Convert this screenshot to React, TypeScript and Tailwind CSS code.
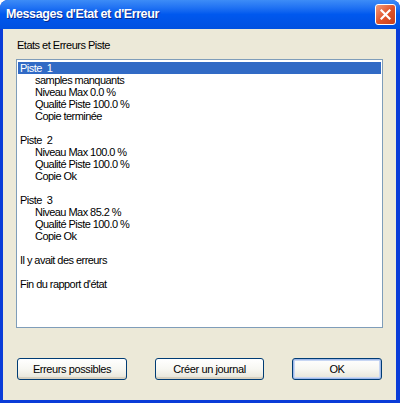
import React from 'react'

type Line = { text: string; indent?: boolean; selected?: boolean }

const lines: Line[] = [
  { text: 'Piste  1', selected: true },
  { text: 'samples manquants', indent: true },
  { text: 'Niveau Max 0.0 %', indent: true },
  { text: 'Qualité Piste 100.0 %', indent: true },
  { text: 'Copie terminée', indent: true },
  { text: '' },
  { text: 'Piste  2' },
  { text: 'Niveau Max 100.0 %', indent: true },
  { text: 'Qualité Piste 100.0 %', indent: true },
  { text: 'Copie Ok', indent: true },
  { text: '' },
  { text: 'Piste  3' },
  { text: 'Niveau Max 85.2 %', indent: true },
  { text: 'Qualité Piste 100.0 %', indent: true },
  { text: 'Copie Ok', indent: true },
  { text: '' },
  { text: 'Il y avait des erreurs' },
  { text: '' },
  { text: "Fin du rapport d'état" },
]

function XpButton({ label, width, isDefault }: { label: string; width: string; isDefault?: boolean }) {
  return (
    <button
      className={`${width} h-[22px] rounded-[3px] border border-[#003c74] bg-gradient-to-b from-white via-[#f7f7f2] to-[#e6e4d7] text-[11px] tracking-[-0.4px] text-black ${
        isDefault ? 'shadow-[inset_0_0_0_1px_#9fb8e8,inset_0_0_0_2px_#c7d6f3]' : 'shadow-[inset_0_-2px_0_#d6d0c0]'
      }`}
    >
      {label}
    </button>
  )
}

export default function App() {
  return (
    <div
      className="w-[400px] h-[403px] bg-white"
      style={{ fontFamily: '"Liberation Sans", Arial, sans-serif' }}
    >
      <div className="w-full h-full flex flex-col rounded-t-[8px] bg-[#0a3cd8] overflow-hidden">
        {/* Title bar */}
        <div className="h-[29px] flex items-center justify-between pl-[6px] pr-[4px] bg-gradient-to-b from-[#3d8cf7] via-[#0058ee] to-[#0050e0]">
          <span className="text-white font-bold text-[12.5px] tracking-[-0.4px] [text-shadow:1px_1px_0_#0a2a8c]">
            Messages d'Etat et d'Erreur
          </span>
          <div className="w-[21px] h-[21px] rounded-[3px] border border-white bg-gradient-to-br from-[#f19b7c] via-[#e1542b] to-[#c8401c] flex items-center justify-center">
            <svg width="11" height="11" viewBox="0 0 11 11">
              <path d="M1.5 1.5 L9.5 9.5 M9.5 1.5 L1.5 9.5" stroke="white" strokeWidth="2.2" strokeLinecap="square" />
            </svg>
          </div>
        </div>

        {/* Body */}
        <div className="flex-1 ml-[3px] mr-[4px] mb-[3px] bg-[#ece9d8] flex flex-col">
          <div className="pl-[14px] pt-[10px] h-[30px] text-[11px] tracking-[-0.5px] text-black leading-[13px]">
            Etats et Erreurs Piste
          </div>
          <div className="ml-[13px] w-[367px] h-[269px] border border-[#7f9db9] bg-white p-[1px] pt-[2px]">
            {lines.map((l, i) => (
              <div
                key={i}
                className={`h-[12px] leading-[12px] text-[11px] tracking-[-0.55px] whitespace-pre ${
                  l.selected ? 'bg-[#316ac5] text-white' : 'text-black'
                } ${l.indent ? 'pl-[17px]' : 'pl-[2px]'}`}
              >
                {l.text}
              </div>
            ))}
          </div>
          <div className="flex items-start pt-[30px] pl-[14px]">
            <XpButton label="Erreurs possibles" width="w-[110px]" />
            <div className="w-[28px]" />
            <XpButton label="Créer un journal" width="w-[109px]" />
            <div className="w-[28px]" />
            <XpButton label="OK" width="w-[90px]" isDefault />
          </div>
        </div>
      </div>
    </div>
  )
}
